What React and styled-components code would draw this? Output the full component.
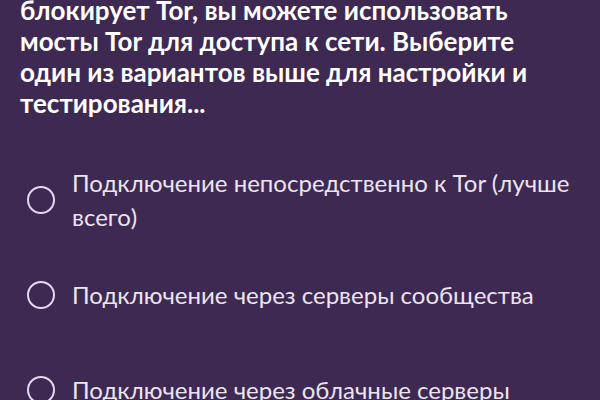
import React, { useState } from "react";
import styled, { createGlobalStyle } from "styled-components";

const GlobalStyle = createGlobalStyle`
  html, body {
    margin: 0;
    padding: 0;
    background: #3e2952;
  }
  body {
    font-family: Lato, "Noto Sans", sans-serif;
    overflow: hidden;
  }
`;

const Page = styled.div`
  width: 600px;
  height: 400px;
  overflow: hidden;
  background: #3e2952;
  padding: 0 20px;
  box-sizing: border-box;
`;

const Intro = styled.p`
  margin: -5px 0 0;
  max-width: 530px;
  font-size: 26px;
  font-weight: 700;
  line-height: 31px;
  color: #ffffff;
`;

const OptionList = styled.div`
  display: flex;
  flex-direction: column;
  margin-top: 33px;
  padding-left: 7px;
`;

const OptionRow = styled.label`
  display: flex;
  align-items: center;
  gap: 17px;
  min-height: 95px;
  cursor: pointer;
`;

const HiddenInput = styled.input`
  position: absolute;
  opacity: 0;
  pointer-events: none;
`;

const Circle = styled.span`
  flex: none;
  width: 28px;
  height: 28px;
  border-radius: 50%;
  border: 2.5px solid #e2d9ec;
  box-sizing: border-box;
  display: flex;
  align-items: center;
  justify-content: center;

  &::after {
    content: "";
    width: 14px;
    height: 14px;
    border-radius: 50%;
    background: #e2d9ec;
    display: ${(p) => (p.$checked ? "block" : "none")};
  }
`;

const OptionText = styled.span`
  font-size: 24px;
  font-weight: 400;
  line-height: 34px;
  color: #ebe4f1;
`;

const options = [
  { id: "direct", label: "Подключение непосредственно к Tor (лучше всего)" },
  { id: "community", label: "Подключение через серверы сообщества" },
  { id: "cloud", label: "Подключение через облачные серверы" },
];

export default function App() {
  const [selected, setSelected] = useState(null);

  return (
    <Page>
      <GlobalStyle />
      <Intro>
        блокирует Tor, вы можете использовать мосты Tor для доступа к сети.
        Выберите один из вариантов выше для настройки и тестирования...
      </Intro>
      <OptionList>
        {options.map((o) => (
          <OptionRow key={o.id}>
            <HiddenInput
              type="radio"
              name="connection"
              checked={selected === o.id}
              onChange={() => setSelected(o.id)}
            />
            <Circle $checked={selected === o.id} />
            <OptionText>{o.label}</OptionText>
          </OptionRow>
        ))}
      </OptionList>
    </Page>
  );
}
